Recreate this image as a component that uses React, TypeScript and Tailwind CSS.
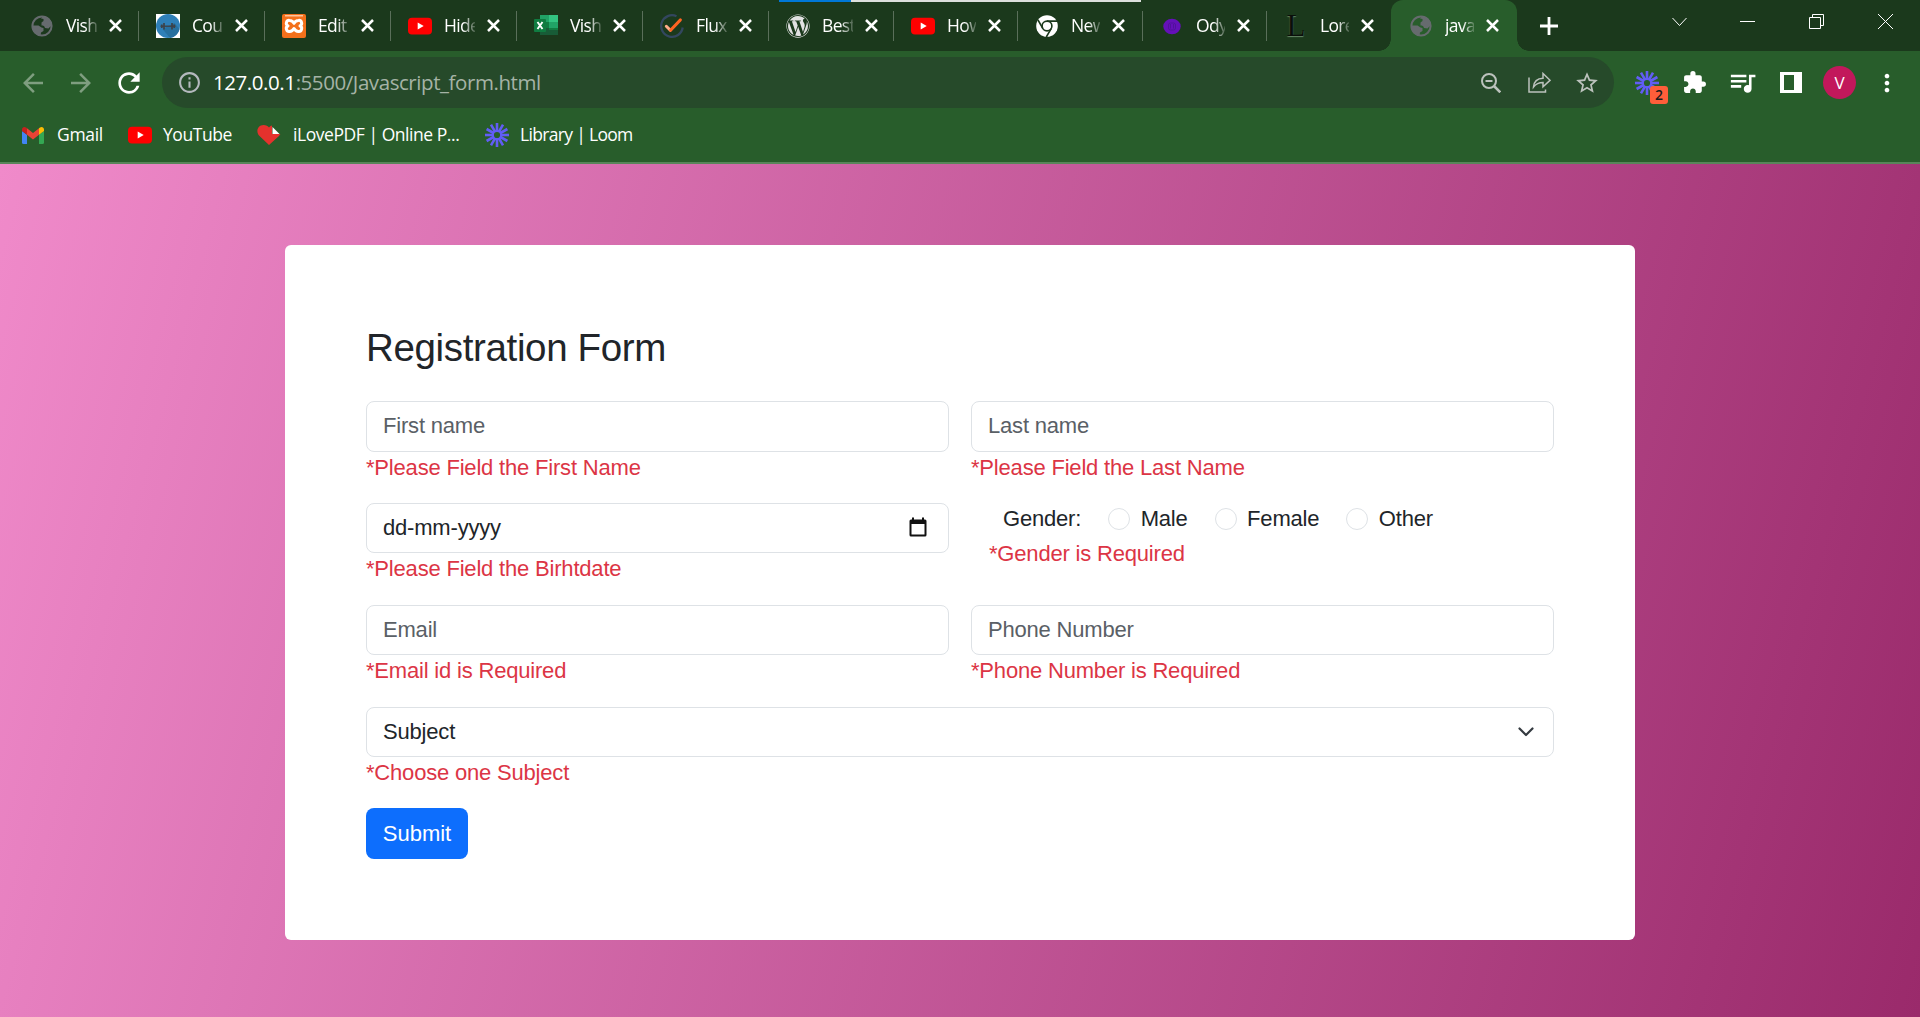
import React from "react";
import { FaWordpress } from "react-icons/fa";
import {
  MdArrowBack, MdArrowForward, MdRefresh, MdInfoOutline, MdExtension, MdQueueMusic,
  MdStarOutline, MdMoreVert,
} from "react-icons/md";

const YouTube = () => (
  <svg width="24" height="24" viewBox="0 0 24 24"><rect y="3.7" width="24" height="16.8" rx="4" fill="#f00" /><path d="M9.7 8.6v7l6-3.5z" fill="#fff" /></svg>
);
const Globe = () => (
  <svg width="22" height="22" viewBox="0 0 22 22">
    <circle cx="11" cy="11" r="9.6" fill="none" stroke="#666b6e" strokeWidth="2" />
    <path d="M12 1c5 .5 8.500 4 9 9-1 1.800-2.500 2-3.500 3.500l-3.500-.5c-.5-2-1.500-2.500-3.500-2.500V7.500l2-1.500V4L10 3.500z" fill="#666b6e" />
    <path d="M1 10.500h6.500l3 2 2 .5v3l-2.500 1.500-.5 3.500C4.500 20 1 16 1 10.500z" fill="#666b6e" />
  </svg>
);
const Dumbbell = () => (
  <svg width="24" height="24" viewBox="0 0 24 24"><rect width="24" height="24" fill="#fff" /><circle cx="12" cy="12" r="12" fill="#2f80b8" /><path d="M18.500 9l5 6a12 12 0 0 1-9.500 9L6.500 15z" fill="#27709f" /><path d="M4.500 12.200h15" stroke="#3d4248" strokeWidth="1.400" /><path d="M8 9v6.500M16 9v6.500M5.800 10.500v3.500M18.200 10.500v3.500" stroke="#3d4248" strokeWidth="1.700" /></svg>
);
const Xampp = () => (
  <svg width="24" height="24" viewBox="0 0 24 24"><rect width="24" height="24" rx="2" fill="#f3701b" /><path d="M3 1.800h18" stroke="#ffd9bd" strokeWidth="1.200" /><path d="M12 9.300Q10.500 6.400 7.600 6.400A2.900 2.900 0 0 0 6 11.900A2.900 2.900 0 0 0 7.600 17.400Q10.500 17.400 12 14.500Q13.500 17.400 16.400 17.400A2.900 2.900 0 0 0 18 11.900A2.900 2.900 0 0 0 16.400 6.400Q13.500 6.400 12 9.300z" fill="none" stroke="#fff" strokeWidth="3" strokeLinejoin="round" /></svg>
);
const Excel = () => (
  <svg width="24" height="24" viewBox="0 0 24 24"><path d="M6 1h9v7H6z" fill="#21a366" /><path d="M15 1h9v7h-9z" fill="#33c481" /><path d="M6 8h9v6H6z" fill="#107c41" /><path d="M15 8h9v6h-9z" fill="#21a366" /><path d="M6 14h18v7H6z" fill="#185c37" /><path d="M15 14h9v2h-9z" fill="#107c41" /><rect y="5" width="12" height="13" rx="1" fill="#107c41" /><path d="M3.500 8l5 7M8.500 8l-5 7" stroke="#fff" strokeWidth="1.900" /></svg>
);
const Check = () => (
  <svg width="24" height="24" viewBox="0 0 24 24"><path d="M16.500 2.200a10.800 10.800 0 1 0 6.200 11.300" fill="none" stroke="#33475f" strokeWidth="2.300" /><path d="M6.300 12.300l4 4" stroke="#ffac8b" strokeWidth="3" strokeLinecap="round" /><path d="M10.800 16L20.300 6" stroke="#ff6422" strokeWidth="3.200" strokeLinecap="round" /></svg>
);
const Chrome = () => (
  <svg width="22" height="22" viewBox="0 0 22 22"><circle cx="11" cy="11" r="10.800" fill="#fff" /><circle cx="11" cy="11" r="4.900" fill="none" stroke="#1b391c" strokeWidth="1.600" /><path d="M11 6.100h10M6.900 13.600L2 5M15.200 13.600L10.300 22" stroke="#1b391c" strokeWidth="1.600" /></svg>
);
const Blob = () => (
  <svg width="22" height="22" viewBox="0 0 22 22"><ellipse cx="11" cy="11.500" rx="8.700" ry="7.800" fill="#6410b8" /><rect x="7.500" y="8" width="7" height="7" rx="2" fill="none" stroke="#51109b" /><path d="M9.500 9v4.500M12.500 9v4.500" stroke="#51109b" /></svg>
);
const LetterL = () => <span className="font-['Liberation_Serif',serif] text-[31px] leading-[22px] text-[#0a0f0a] [text-shadow:0_1px_1px_#6a8a6a]">L</span>;
const Loom = () => (
  <svg width="24" height="24" viewBox="0 0 24 24" stroke="#625df5" fill="none">
    <circle cx="12" cy="12" r="4.200" strokeWidth="2.200" />
    {[0, 30, 60, 90, 120, 150, 180, 210, 240, 270, 300, 330].map((a) => (
      <path key={a} d="M12 0v8" strokeWidth="2.600" transform={`rotate(${a} 12 12)`} />
    ))}
  </svg>
);
const Gmail = () => (
  <svg width="22" height="17" viewBox="0 0 22 17"><path d="M0 4l5 3.800V17H1.500A1.500 1.500 0 0 1 0 15.500z" fill="#4285f4" /><path d="M22 4l-5 3.800V17h3.500a1.500 1.500 0 0 0 1.500-1.500z" fill="#34a853" /><path d="M5 1.300l6 4.600 6-4.600v6.500l-6 4.600-6-4.600z" fill="#ea4335" /><path d="M0 4V2.500C0 .3 2.300-.6 4 .6l1 .7v6.500L0 4z" fill="#c5221f" /><path d="M22 4V2.500C22 .3 19.700-.6 18 .6l-1 .7v6.500L22 4z" fill="#fbbc04" /></svg>
);
const Heart = () => (
  <svg width="24" height="20" viewBox="0 0 24 20"><path d="M12 20L2 10.500C-1.500 6 1 0 6.500 0 9 0 11 1.200 12 2.500 13 1.200 14 .7 15 .5v8.500h8.300c-.4 1-1 1.500-1.300 2z" fill="#e5322d" /><path d="M15.500 2l7 7h-7z" fill="#fff" /></svg>
);

const tabs: { label: string; icon: React.ReactNode; cls: string }[] = [
  { label: "Vish", icon: <Globe />, cls: "w-[126px]" },
  { label: "Cou", icon: <Dumbbell />, cls: "w-[126px]" },
  { label: "Edit", icon: <Xampp />, cls: "w-[126px]" },
  { label: "Hide", icon: <YouTube />, cls: "w-[126px]" },
  { label: "Vish", icon: <Excel />, cls: "w-[126px]" },
  { label: "Flux", icon: <Check />, cls: "w-[126px]" },
  { label: "Best", icon: <FaWordpress size={24} color="#e2e2e2" />, cls: "w-[125px]" },
  { label: "How", icon: <YouTube />, cls: "w-[124px]" },
  { label: "New", icon: <Chrome />, cls: "w-[125px]" },
  { label: "Ody", icon: <Blob />, cls: "w-[124px]" },
  { label: "Lore", icon: <LetterL />, cls: "w-[124px]" },
];

function TabBody({ label, icon, narrow }: { label: string; icon: React.ReactNode; narrow?: boolean }) {
  return (
    <>
      <span className="ml-[17px] flex h-6 w-6 shrink-0 items-center justify-center">{icon}</span>
      <span className={`ml-3 shrink-0 overflow-hidden pb-px whitespace-nowrap text-[17.5px] leading-6 tracking-[-0.65px] text-white [mask-image:linear-gradient(90deg,#000_60%,#0003)] ${narrow ? "w-[29px]" : "w-[31px]"}`}>{label}</span>
      <svg className="ml-3 shrink-0" width="13" height="13" viewBox="0 0 13 13"><path d="M1 1l11 11M12 1L1 12" stroke="#fff" strokeWidth="2.500" /></svg>
    </>
  );
}

function Field({ text, error, dark, icon, tall }: { text: string; error: string; dark?: boolean; icon?: React.ReactNode; tall?: boolean }) {
  return (
    <div className="min-w-0">
      <div className={`flex items-center justify-between rounded-[8px] border border-[#dee2e6] bg-white pr-[19px] pl-4 ${tall ? "h-[51px]" : "h-[50px]"}`}>
        <span className={dark ? "pb-[2px] text-[#212529]" : "pb-[2px] text-[#5a6066]"}>{text}</span>
        {icon}
      </div>
      <div className="leading-[31px] text-[#dc3545]">{error}</div>
    </div>
  );
}

const Calendar = () => (
  <svg className="mr-[2px] mb-[2px]" width="18" height="20" viewBox="0 0 18 20"><rect x="0.500" y="2.500" width="17" height="17" rx="1.500" fill="#111" /><path d="M2.500 7h13v10.500h-13z" fill="#fff" /><path d="M4 .5v3M14 .5v3" stroke="#111" strokeWidth="2" /></svg>
);
const Chevron = () => (
  <svg className="mb-px" width="16" height="10" viewBox="0 0 16 10"><path d="M1.500 1.500L8 8l6.500-6.500" fill="none" stroke="#343a40" strokeWidth="2.200" strokeLinecap="round" strokeLinejoin="round" /></svg>
);
const Radio = ({ label }: { label: string }) => (
  <label className="flex items-center gap-[10.500px]"><span className="mt-px h-[22px] w-[22px] rounded-full border border-[#dee2e6]" />{label}</label>
);

export default function App() {
  return (
    <div className="flex h-[1017px] w-[1920px] flex-col overflow-hidden font-['Open_Sans',sans-serif]">
      <div className="relative flex h-[51px] shrink-0 bg-[#1b391c] pl-[13px]">
        <div className="absolute top-0 left-[779px] flex h-[2px]"><i className="w-[72px] bg-[#0078d7]" /><i className="w-[290px] bg-[#dcdfdc]" /></div>
        {tabs.map((t, i) => (
          <div key={i} className={`flex shrink-0 items-center ${t.cls}`}>
            <TabBody label={t.label} icon={t.icon} narrow={i > 6} />
            {i < 10 && <span className="ml-auto h-[30px] w-[1.500px] bg-[#5a6f5a]" />}
          </div>
        ))}
        <div className="relative flex w-[126px] shrink-0 items-center rounded-t-[12px] bg-[#285d2b] pl-px">
          <span className="absolute bottom-0 -left-3 h-3 w-3 bg-[radial-gradient(circle_at_0_0,transparent_11.500px,#285d2b_12px)]" />
          <span className="absolute -right-3 bottom-0 h-3 w-3 bg-[radial-gradient(circle_at_100%_0,transparent_11.500px,#285d2b_12px)]" />
          <TabBody label="java" icon={<Globe />} narrow />
        </div>
        <svg className="mt-[17px] ml-[23px]" width="18" height="18" viewBox="0 0 18 18"><path d="M9 0v18M0 9h18" stroke="#fff" strokeWidth="2.800" /></svg>
        <div className="ml-auto flex pt-[14px] pr-[27px]">
          <svg className="mt-[3px]" width="15" height="10" viewBox="0 0 15 10"><path d="M.5 1l7 7.500 7-7.500" fill="none" stroke="#fff" /></svg>
          <svg className="ml-[53px]" width="15" height="15" viewBox="0 0 15 15"><path d="M0 7.500h15" stroke="#fff" /></svg>
          <svg className="ml-[54px]" width="15" height="15" viewBox="0 0 15 15"><path d="M.5 3.500h11v11H.5zM3.500 3.500v-3h11v11h-3" fill="none" stroke="#fff" /></svg>
          <svg className="ml-[54px]" width="15" height="15" viewBox="0 0 15 15"><path d="M0 0l15 15M15 0L0 15" stroke="#fff" /></svg>
        </div>
      </div>

      <div className="flex h-[113px] shrink-0 flex-col border-b-2 border-[#58855a] bg-[#285d2b]">
        <div className="flex h-[63px] items-center">
          <MdArrowBack className="ml-[18px]" size={30} color="#7f9e80" />
          <MdArrowForward className="ml-[18px]" size={30} color="#7f9e80" />
          <MdRefresh className="ml-[17px]" size={32} color="#fff" />
          <div className="ml-[17px] flex h-[51px] w-[1452px] items-center rounded-full bg-[#264a2a] pr-[14px] pl-[15px]">
            <MdInfoOutline size={25} color="#b4b9be" />
            <span className="ml-[11px] pb-[2px] text-[20.500px] leading-7 tracking-[-0.43px] text-[#a5b3a6]"><span className="text-white">127.0.0.1</span>:5500/Javascript_form.html</span>
            <svg className="ml-auto" width="20" height="20" viewBox="0 0 20 20" fill="none" stroke="#bcc2bd" strokeWidth="2"><circle cx="8" cy="8" r="7" /><path d="M13 13l6.300 6.300" strokeWidth="2.600" /><path d="M4.500 8h7" /></svg>
            <svg className="ml-[27px]" width="23" height="21" viewBox="0 0 23 21" fill="none" stroke="#bcc2bd" strokeWidth="1.500"><path d="M1 5.500V20h16.500v-2.500" /><path d="M5.500 15C6 9 10 6.500 15 6.300V1.500l7 6.800-7 6.400v-4.200c-4 0-7 1.300-9.500 4.500z" /></svg>
            <MdStarOutline className="ml-[23px]" size={26} color="#bcc2bd" />
          </div>
          <div className="relative ml-[21px]">
            <Loom />
            <span className="absolute top-[15px] left-[15px] flex h-[18px] w-[18px] items-center justify-center rounded-[3px] bg-[#ff5e3a] text-[14px] font-semibold text-[#1c1c1c]">2</span>
          </div>
          <MdExtension className="ml-[23px]" size={25} color="#fff" />
          <MdQueueMusic className="ml-[20px]" size={31} color="#fff" />
          <svg className="ml-[22px]" width="22" height="21" viewBox="0 0 22 21"><path d="M0 0h22v21H0z" fill="#fff" /><path d="M4 3h10v15H4z" fill="#285d2b" /></svg>
          <span className="ml-[21px] flex h-[33px] w-[33px] items-center justify-center rounded-full bg-[#c2185b] text-[17px] text-white">V</span>
          <MdMoreVert className="ml-[17px]" size={28} color="#fff" />
        </div>
        <div className="flex h-[42px] items-center text-[17.500px] leading-6 tracking-[-0.45px] text-white">
          <span className="ml-[22px] w-[22px]"><Gmail /></span><span className="ml-[13px] w-[71px] pb-[2px] tracking-[-0.3px]">Gmail</span>
          <span className="w-6"><YouTube /></span><span className="ml-[11px] w-[94px] pb-[2px]">YouTube</span>
          <span className="w-6"><Heart /></span><span className="ml-[12px] w-[192px] pb-[2px] whitespace-nowrap">iLovePDF | Online P...</span>
          <span className="w-6"><Loom /></span><span className="ml-[11px] pb-[2px] tracking-[-0.68px]">Library | Loom</span>
        </div>
      </div>

      <div className="flex-1 bg-[linear-gradient(105deg,#f08aca,#9a2a6b)] pt-[81px] pl-[285px]">
        <div className="h-[695px] w-[1350px] rounded-[6px] bg-white px-[81px] pt-[80px] font-['Liberation_Sans',sans-serif] text-[22px] leading-[33px] tracking-[-0.19px] text-[#212529]">
          <h3 className="h-[76px] text-[38.500px] leading-[46px] tracking-[-0.35px]">Registration Form</h3>
          <div className="grid grid-cols-2 gap-x-[22px] [grid-auto-rows:102px]">
            <Field tall text="First name" error="*Please Field the First Name" />
            <Field tall text="Last name" error="*Please Field the Last Name" />
            <Field text="dd-mm-yyyy" error="*Please Field the Birhtdate" dark icon={<Calendar />} />
            <div className="pl-[18px]">
              <div className="-mt-px flex h-[33px] items-center pl-[14px]"><span className="mr-[27px]">Gender:</span><div className="flex gap-[27px]"><Radio label="Male" /><Radio label="Female" /><Radio label="Other" /></div></div>
              <div className="pt-[2px] text-[#dc3545]">*Gender is Required</div>
            </div>
            <Field text="Email" error="*Email id is Required" />
            <Field text="Phone Number" error="*Phone Number is Required" />
            <div className="col-span-2"><Field text="Subject" error="*Choose one Subject" dark icon={<Chevron />} /></div>
          </div>
          <button className="-mt-px block h-[51px] w-[102px] rounded-[8px] bg-[#0d6efd] tracking-normal text-white">Submit</button>
        </div>
      </div>
    </div>
  );
}
